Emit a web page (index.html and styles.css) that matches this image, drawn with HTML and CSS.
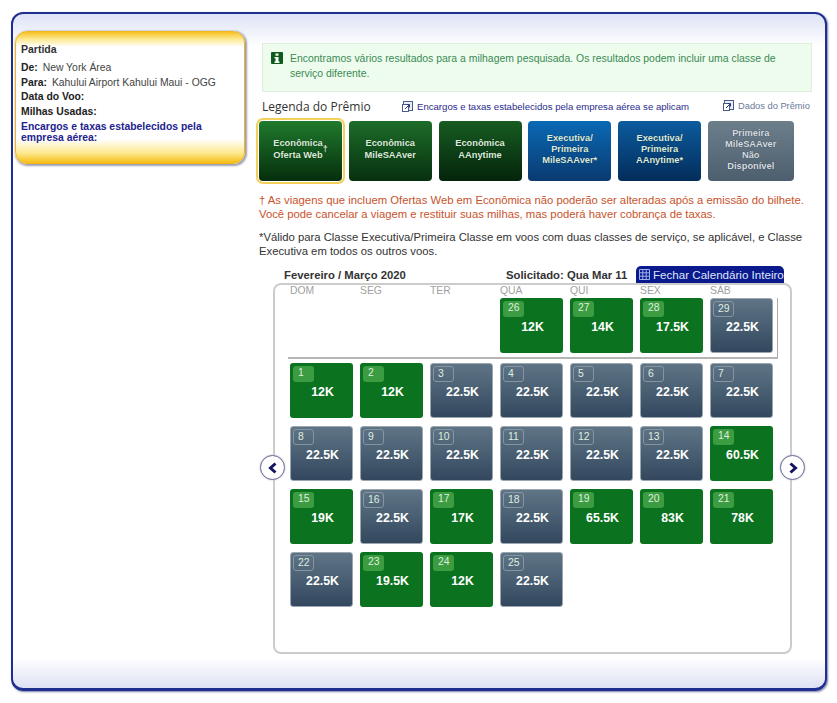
FILE: index.html
```html
<!DOCTYPE html>
<html lang="pt">
<head>
  <meta charset="UTF-8" />
  <title>Calendário de Prêmios</title>
  <link rel="stylesheet" href="styles.css">
</head>
<body>
  <div class="outer">
    <div class="sidebar">
      <h4>Partida</h4>
      <p><b>De:</b> New York Área</p>
      <p><b>Para:</b> Kahului Airport Kahului Maui - OGG</p>
      <p><b>Data do Voo:</b></p>
      <p><b>Milhas Usadas:</b></p>
      <p class="fees">Encargos e taxas estabelecidos pela empresa aérea:</p>
    </div>

    <div class="main">
      <div class="notice">
        <svg class="info" viewBox="0 0 12 12"><rect width="12" height="12" rx="1" fill="#0d5c1c"/><rect x="4.500" y="1.500" width="3" height="2.200" fill="#fff"/><path d="M3.500 5h4v4.500h1v1.500h-5V9.500h1V6.300h-1z" fill="#fff"/></svg>
        <span>Encontramos vários resultados para a milhagem pesquisada. Os resultados podem incluir uma classe de serviço diferente.</span>
      </div>

      <div class="legend-head">
        <span class="legend-title">Legenda do Prêmio</span>
        <a class="ext fees-link"><svg viewBox="0 0 11 11"><rect x="1.500" y="0.500" width="9" height="9" fill="#e8edf5" stroke="#4a5a8a"/><rect x="0.500" y="3.500" width="6" height="7" fill="#fff" stroke="#4a5a8a"/><path d="M3 8l4-4M4.500 3.500H7.500V6.500" fill="none" stroke="#2a3a7a"/></svg>Encargos e taxas estabelecidos pela empresa aérea se aplicam</a>
        <a class="ext data-link"><svg viewBox="0 0 11 11"><rect x="1.500" y="0.500" width="9" height="9" fill="#e8edf5" stroke="#4a5a8a"/><rect x="0.500" y="3.500" width="6" height="7" fill="#fff" stroke="#4a5a8a"/><path d="M3 8l4-4M4.500 3.500H7.500V6.500" fill="none" stroke="#2a3a7a"/></svg>Dados do Prêmio</a>
      </div>

      <div class="legend">
        <div class="award two web selected">Econômica<br>Oferta Web<sup>†</sup></div>
        <div class="award two saver">Econômica<br>MileSAAver</div>
        <div class="award two any">Econômica<br>AAnytime</div>
        <div class="award biz-saver">Executiva/<br>Primeira<br>MileSAAver*</div>
        <div class="award biz-any">Executiva/<br>Primeira<br>AAnytime*</div>
        <div class="award none">Primeira<br>MileSAAver<br>Não<br>Disponível</div>
      </div>

      <p class="warn">† As viagens que incluem Ofertas Web em Econômica não poderão ser alteradas após a emissão do bilhete. Você pode cancelar a viagem e restituir suas milhas, mas poderá haver cobrança de taxas.</p>
      <p class="note">*Válido para Classe Executiva/Primeira Classe em voos com duas classes de serviço, se aplicável, e Classe Executiva em todos os outros voos.</p>

      <div class="cal-head">
        <span class="month">Fevereiro / Março 2020</span>
        <span class="asked">Solicitado: Qua Mar 11</span>
        <span class="close-cal"><svg viewBox="0 0 11 11"><path d="M.5.500h10v10H.5zM.5 3.800h10M.5 7.200h10M3.800.500v10M7.200.500v10" fill="none" stroke="#9db4ee"/></svg>Fechar Calendário Inteiro</span>
      </div>

      <div class="frame">
        <div class="days">
          <span>DOM</span><span>SEG</span><span>TER</span><span>QUA</span><span>QUI</span><span>SEX</span><span>SÁB</span>
        </div>

        <div class="first-week">
          <div class="week">
            <div></div><div></div><div></div>
            <div class="cell g"><i>26</i><b>12K</b></div>
            <div class="cell g"><i>27</i><b>14K</b></div>
            <div class="cell g"><i>28</i><b>17.5K</b></div>
            <div class="cell s"><i>29</i><b>22.5K</b></div>
          </div>
        </div>

        <div class="week weeks">
          <div class="cell g"><i>1</i><b>12K</b></div>
          <div class="cell g"><i>2</i><b>12K</b></div>
          <div class="cell s"><i>3</i><b>22.5K</b></div>
          <div class="cell s"><i>4</i><b>22.5K</b></div>
          <div class="cell s"><i>5</i><b>22.5K</b></div>
          <div class="cell s"><i>6</i><b>22.5K</b></div>
          <div class="cell s"><i>7</i><b>22.5K</b></div>

          <div class="cell s"><i>8</i><b>22.5K</b></div>
          <div class="cell s"><i>9</i><b>22.5K</b></div>
          <div class="cell s"><i>10</i><b>22.5K</b></div>
          <div class="cell s"><i>11</i><b>22.5K</b></div>
          <div class="cell s"><i>12</i><b>22.5K</b></div>
          <div class="cell s"><i>13</i><b>22.5K</b></div>
          <div class="cell g"><i>14</i><b>60.5K</b></div>

          <div class="cell g"><i>15</i><b>19K</b></div>
          <div class="cell s"><i>16</i><b>22.5K</b></div>
          <div class="cell g"><i>17</i><b>17K</b></div>
          <div class="cell s"><i>18</i><b>22.5K</b></div>
          <div class="cell g"><i>19</i><b>65.5K</b></div>
          <div class="cell g"><i>20</i><b>83K</b></div>
          <div class="cell g"><i>21</i><b>78K</b></div>

          <div class="cell s"><i>22</i><b>22.5K</b></div>
          <div class="cell g"><i>23</i><b>19.5K</b></div>
          <div class="cell g"><i>24</i><b>12K</b></div>
          <div class="cell s"><i>25</i><b>22.5K</b></div>
        </div>

        <div class="arrow prev"><svg viewBox="0 0 12 12"><path d="M8.500 1.500L3.500 6l5 4.500" fill="none" stroke="#14145e" stroke-width="3"/></svg></div>
        <div class="arrow next"><svg viewBox="0 0 12 12"><path d="M3.500 1.500L8.500 6l-5 4.500" fill="none" stroke="#14145e" stroke-width="3"/></svg></div>
      </div>
    </div>
  </div>
</body>
</html>
```

FILE: styles.css
```css
* {
  box-sizing: border-box;
}

body {
  background-color: #ffffff;
  color: #222;
  font-family: "Liberation Sans", Arial, sans-serif;
  margin: 0;
  height: 703px;
  overflow: hidden;
  padding: 12px 10px 0 11px;
}

.outer {
  display: flex;
  align-items: flex-start;
  height: 679px;
  border: 2px solid #1f2f8f;
  border-bottom-width: 3px;
  border-radius: 12px;
  box-shadow: 1px 1px 2px rgba(30, 40, 110, 0.6);
  background: linear-gradient(to bottom, #dde3f6 0, #ffffff 32px, #ffffff calc(100% - 30px), #dde1f4 100%);
}

/* left summary */
.sidebar {
  width: 230px;
  height: 133px;
  margin: 17px 0 0 2px;
  padding: 11px 5px 0;
  flex-shrink: 0;
  font-size: 10.4px;
  border: 1px solid #f0b61c;
  border-radius: 12px;
  background: linear-gradient(to bottom, #f7c021 0, #fde98f 7px, #ffffff 15px, #ffffff calc(100% - 24px), #fde98f calc(100% - 10px), #f6bd16 100%);
  box-shadow: 1px 1px 2px 1px rgba(90, 90, 120, 0.6);
}

.sidebar h4 {
  margin: 0 0 7px;
  font-size: 10.5px;
  line-height: 12px;
  font-weight: bold;
  color: #333;
}

.sidebar p {
  margin: 0 0 2.700px;
  line-height: 12px;
  color: #444;
}

.sidebar b {
  color: #222;
  margin-right: 2px;
}

.sidebar .fees {
  color: #23238f;
  font-weight: bold;
  line-height: 11px;
  margin-top: 3px;
}

/* right column */
.main {
  width: 553px;
  margin-left: 14px;
  padding-top: 29px;
}

.notice {
  display: flex;
  align-items: flex-start;
  margin-left: 3px;
  width: 550px;
  height: 49px;
  padding: 7px 8px 0 8px;
  background-color: #eefcee;
  border: 1px solid #dfeedd;
  font-size: 10.45px;
  line-height: 15px;
  color: #3a8a55;
}

.info {
  width: 12px;
  height: 12px;
  margin: 1px 7px 0 0;
  flex-shrink: 0;
}

.legend-head {
  display: flex;
  align-items: center;
  height: 29px;
  padding: 0 0 0 3px;
}

.legend-title {
  font-family: "Open Sans", sans-serif;
  font-size: 12px;
  color: #333;
  width: 140px;
}

.ext {
  display: flex;
  align-items: center;
  white-space: nowrap;
}

.ext svg {
  width: 11px;
  height: 11px;
  margin-right: 4px;
}

.fees-link {
  color: #2c2c8c;
  font-size: 9.6px;
  width: 321px;
}

.data-link {
  color: #6a7a9a;
  font-size: 9.3px;
  position: relative;
  top: -1px;
}

.legend {
  display: flex;
  gap: 6.750px;
}

.award {
  width: 83px;
  height: 60px;
  flex-shrink: 0;
  display: flex;
  align-items: center;
  justify-content: center;
  text-align: center;
  padding-bottom: 4px;
  border-radius: 4px;
  font-size: 9.3px;
  font-weight: bold;
  line-height: 11px;
  color: #dcebdc;
  text-shadow: 0 0 1px rgba(0, 0, 0, 0.5);
}

.award.two {
  line-height: 12px;
}

.award sup {
  font-size: 9px;
  line-height: 0;
  vertical-align: 3px;
}

.award.none {
  width: 86px;
  padding-bottom: 2px;
  background: linear-gradient(to bottom, #6d7e8b, #4d5f6e);
  color: #d6dde2;
}

.selected {
  box-shadow: 0 0 0 1px #fff, 0 0 0 3px #f3d05a;
}

.web { background: linear-gradient(to bottom, #1f7a2c, #062e0d); }
.saver { background: linear-gradient(to bottom, #1d6c29, #07300f); }
.any { background: linear-gradient(to bottom, #175c22, #04240b); }
.biz-saver { background: linear-gradient(to bottom, #0a69b4, #0a3a70); }
.biz-any { background: linear-gradient(to bottom, #0c5b9e, #032d5a); }

.warn,
.note {
  margin: 0;
  font-size: 11.3px;
  line-height: 14px;
}

.warn {
  padding-top: 12px;
  color: #c8532b;
}

.note {
  padding-top: 9px;
  color: #333;
}

.cal-head {
  display: flex;
  align-items: center;
  height: 17px;
  margin-top: 8px;
  padding-left: 25px;
  font-size: 11.300px;
  font-weight: bold;
  color: #333;
}

.month {
  width: 222px;
}

.asked {
  width: 130px;
}

.close-cal {
  display: flex;
  align-items: center;
  width: 148px;
  height: 17px;
  padding-left: 3px;
  border-radius: 5px 5px 0 0;
  background-color: #0a1a8c;
  color: #dfe6fb;
  font-weight: normal;
  font-size: 11.6px;
  white-space: nowrap;
}

.close-cal svg {
  width: 11px;
  height: 11px;
  margin-right: 3px;
}

/* calendar */
.frame {
  position: relative;
  width: 519px;
  height: 371px;
  margin-left: 14px;
  border: 2px solid #cccccc;
  border-radius: 8px;
}

.days {
  display: grid;
  grid-template-columns: repeat(7, 70px);
  height: 13px;
  padding-left: 15px;
  font-size: 10.4px;
  line-height: 11px;
  color: #9f9f9f;
}

.first-week {
  width: 490px;
  height: 61px;
  margin-left: 13px;
  padding: 0 0 0 2px;
  border-right: 1px solid #aaa;
  border-bottom: 2px solid #b5b5b5;
}

.week {
  display: grid;
  grid-template-columns: repeat(7, 63px);
  column-gap: 7px;
}

.weeks {
  row-gap: 8px;
  margin: 4px 0 0 15px;
}

.cell {
  position: relative;
  height: 55px;
  border-radius: 3px;
  color: #fff;
}

.cell.g {
  background-color: #0b7320;
}

.cell.s {
  background: linear-gradient(to bottom, #5f7586, #33485e);
  border: 1px solid #9aa6b0;
}

.cell i {
  display: block;
  width: 21px;
  height: 16px;
  margin: 3px 0 0 3px;
  padding-left: 5px;
  border-radius: 3px;
  font-style: normal;
  font-size: 10.4px;
  line-height: 14px;
  color: #dfeede;
}

.cell.g i {
  background-color: #3c9c42;
}

.cell.s i {
  margin: 2px 0 0 2px;
  border: 1px solid #8496a4;
  padding-left: 4px;
}

.cell b {
  display: block;
  margin-top: 3px;
  padding-left: 2px;
  text-align: center;
  font-size: 12.300px;
  line-height: 14px;
}

.arrow {
  position: absolute;
  top: 170px;
  width: 25px;
  height: 25px;
  display: flex;
  align-items: center;
  justify-content: center;
  background-color: #fff;
  border: 1px solid #6a6a9a;
  border-radius: 50%;
  box-shadow: 0 0 2px #bbb;
}

.arrow svg {
  width: 12px;
  height: 12px;
}

.prev { left: -15px; }
.next { right: -15px; }
```
